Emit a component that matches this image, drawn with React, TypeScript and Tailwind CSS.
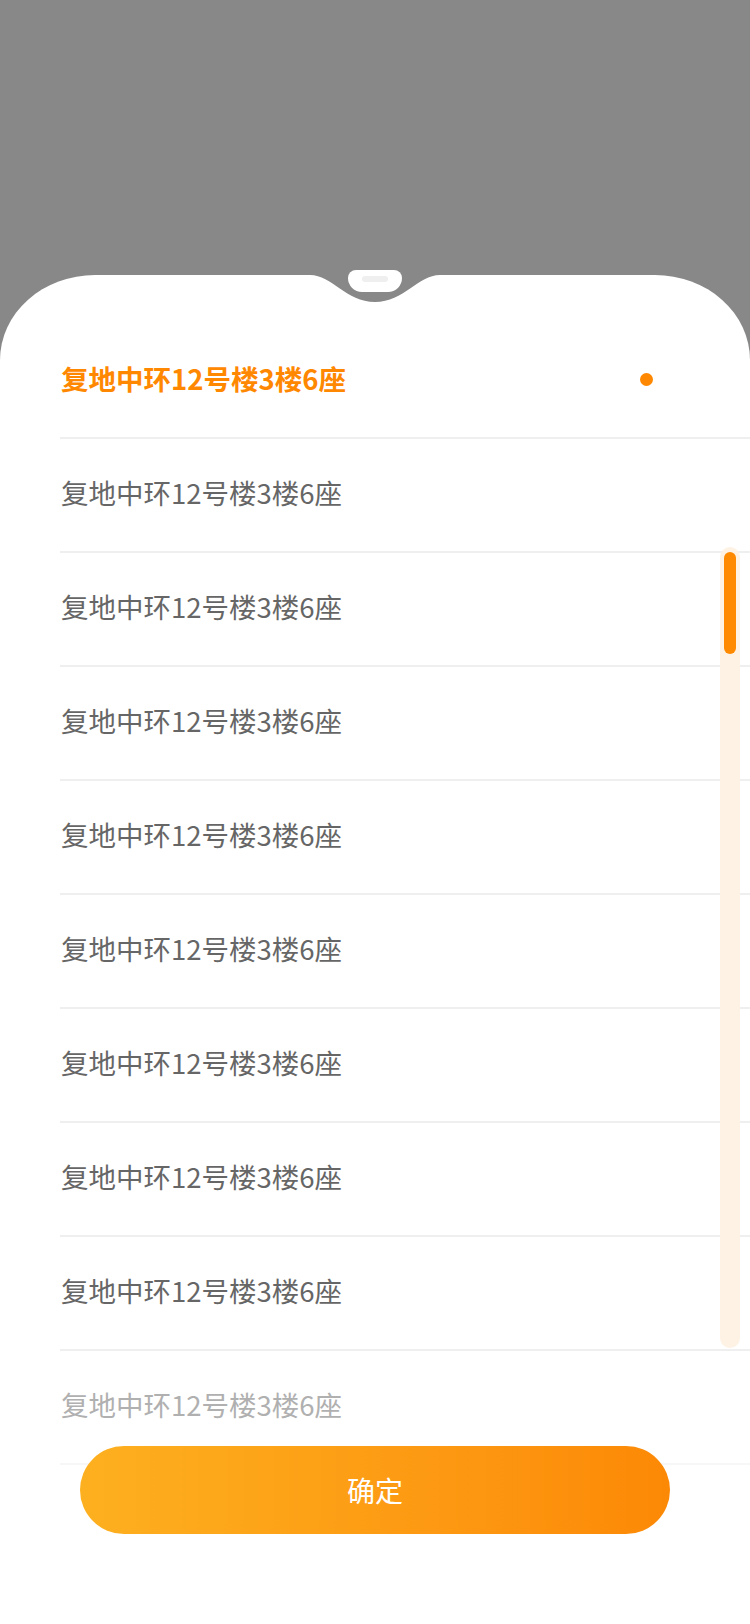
import React from 'react'

const ADDRESS = '复地中环12号楼3楼6座'

const rows = Array.from({ length: 10 }, (_, i) => i)

export default function App() {
  return (
    <div
      className="relative w-[750px] h-[1624px] bg-[#888888] overflow-hidden flex flex-col"
      style={{ fontFamily: '"Noto Sans CJK SC", "Noto Sans", sans-serif' }}
    >
      <div className="h-[275px] shrink-0" />

      {/* Sheet */}
      <div className="relative flex-1 bg-white rounded-tl-[95px_85px] rounded-tr-[95px_85px]">
        {/* notch */}
        <svg
          className="absolute left-[310px] top-0"
          width="130"
          height="30"
          viewBox="0 0 130 30"
        >
          <path d="M0 0 C 22 0, 36 27, 65 27 C 94 27, 108 0, 130 0 Z" fill="#888888" />
        </svg>
        <div className="absolute left-[348px] top-[-5px] w-[54px] h-[22px] bg-white rounded-tl-[8px] rounded-tr-[8px] rounded-bl-[14px] rounded-br-[14px] flex justify-center pt-[6px]">
          <div className="w-[26px] h-[6px] rounded-full bg-[#efefef]" />
        </div>

        {/* list */}
        <div className="pt-[50px] pl-[60px]">
          {rows.map((i) => {
            const active = i === 0
            const faded = i === rows.length - 1
            return (
              <div
                key={i}
                className={`h-[114px] flex items-center justify-between border-b-2 ${
                  faded ? 'border-[#f7f7f7]' : 'border-[#efefef]'
                }`}
              >
                <span
                  className={`text-[27.5px] leading-none pl-[1px] pb-[4px] ${
                    active
                      ? 'text-[#ff8800] font-bold'
                      : faded
                      ? 'text-[#b0b0b0]'
                      : 'text-[#666666]'
                  }`}
                >
                  {ADDRESS}
                </span>
                {active && (
                  <span className="w-[13px] h-[13px] rounded-full bg-[#ff8800] mr-[97px] mb-[4px]" />
                )}
              </div>
            )
          })}
        </div>

        {/* scrollbar */}
        <div className="absolute left-[720px] top-[272px] w-[20px] h-[801px] rounded-full bg-[#fef2e4] px-[4px] pt-[5px]">
          <div className="w-[12px] h-[102px] rounded-full bg-[#ff8a00]" />
        </div>

        {/* confirm button */}
        <button className="absolute left-[80px] top-[1171px] w-[590px] h-[88px] rounded-full bg-gradient-to-r from-[#fdb01f] to-[#fc8906] text-white text-[28px] flex items-center justify-center">
          确定
        </button>
      </div>
    </div>
  )
}
